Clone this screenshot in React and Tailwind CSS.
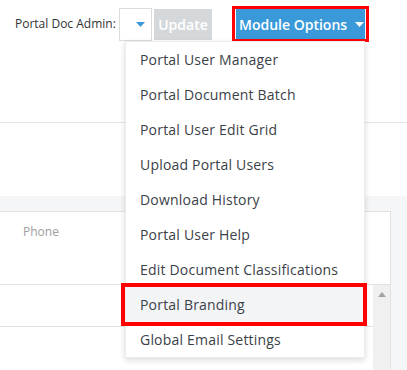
import React from 'react';

const menuItems = [
  'Portal User Manager',
  'Portal Document Batch',
  'Portal User Edit Grid',
  'Upload Portal Users',
  'Download History',
  'Portal User Help',
  'Edit Document Classifications',
  'Portal Branding',
  'Global Email Settings',
];

const Caret = ({ className }) => (
  <svg className={className} width="9" height="5" viewBox="0 0 9 5">
    <path d="M0 0 L9 0 L4.5 5 Z" fill="currentColor" />
  </svg>
);

const App = () => {
  return (
    <div
      className="relative w-[407px] h-[370px] overflow-hidden bg-white"
      style={{ fontFamily: '"Open Sans", "Liberation Sans", sans-serif' }}
    >
      {/* Toolbar */}
      <div className="h-[123px] border-b border-[#e4e4e4]">
        <div className="flex items-center pl-[15px] pt-[6px]">
          <span className="w-[104px] text-[12px] text-[#333] whitespace-nowrap">Portal Doc Admin:</span>
          <div className="w-[33px] h-[33px] border border-[#dcdcdc] bg-white flex items-center justify-end pr-[6px]">
            <Caret className="text-[#3a9ad9]" />
          </div>
          <button className="ml-[2px] w-[58px] h-[31px] bg-[#d5d8db] text-white text-[14px] font-semibold">
            Update
          </button>
          <div className="ml-[20px] border-[3px] border-[#ff0000] px-[1px]">
            <button className="w-[129px] h-[30px] bg-[#3a9ad9] text-white text-[14px] font-semibold flex items-center pl-[3px] gap-[8px] whitespace-nowrap">
              Module Options
              <Caret className="text-white" />
            </button>
          </div>
        </div>
      </div>

      {/* White gap */}
      <div className="h-[73px]" />

      {/* Grid area */}
      <div className="bg-[#f5f6f8] pt-[15px] h-[174px]">
        <div className="w-[391px] h-full bg-white border-t border-r border-[#e2e2e2] flex flex-col">
          <div className="h-[73px] border-b border-[#e2e2e2] pl-[23px] pt-[6px]">
            <span className="text-[12px] text-[#a0a0a0]">Phone</span>
          </div>
          <div className="flex flex-1">
            <div className="flex-1">
              <div className="h-[42px] border-b border-[#e2e2e2]" />
            </div>
            <div className="w-[17px] bg-[#f0f0f0] flex justify-center pt-[7px]">
              <svg width="8" height="5" viewBox="0 0 8 5">
                <path d="M0 5 L8 5 L4 0 Z" fill="#a3a3a3" />
              </svg>
            </div>
          </div>
        </div>
      </div>

      {/* Dropdown menu */}
      <div className="absolute left-[125px] top-[41px] w-[240px] bg-white border border-[#ececec] shadow-[0_2px_6px_rgba(0,0,0,0.15)]">
        {menuItems.map((item) => (
          <div
            key={item}
            className={`relative h-[35px] flex items-center pl-[14px] text-[14px] font-medium tracking-[0.2px] text-[#3b3f48] ${
              item === 'Portal Branding' ? 'bg-[#f3f4f6]' : ''
            }`}
          >
            {item}
            {item === 'Portal Branding' && (
              <div className="absolute -left-[5px] -right-[3px] -top-[4px] -bottom-[4px] border-[4px] border-[#ff0000]" />
            )}
          </div>
        ))}
      </div>
    </div>
  );
};

export default App;
